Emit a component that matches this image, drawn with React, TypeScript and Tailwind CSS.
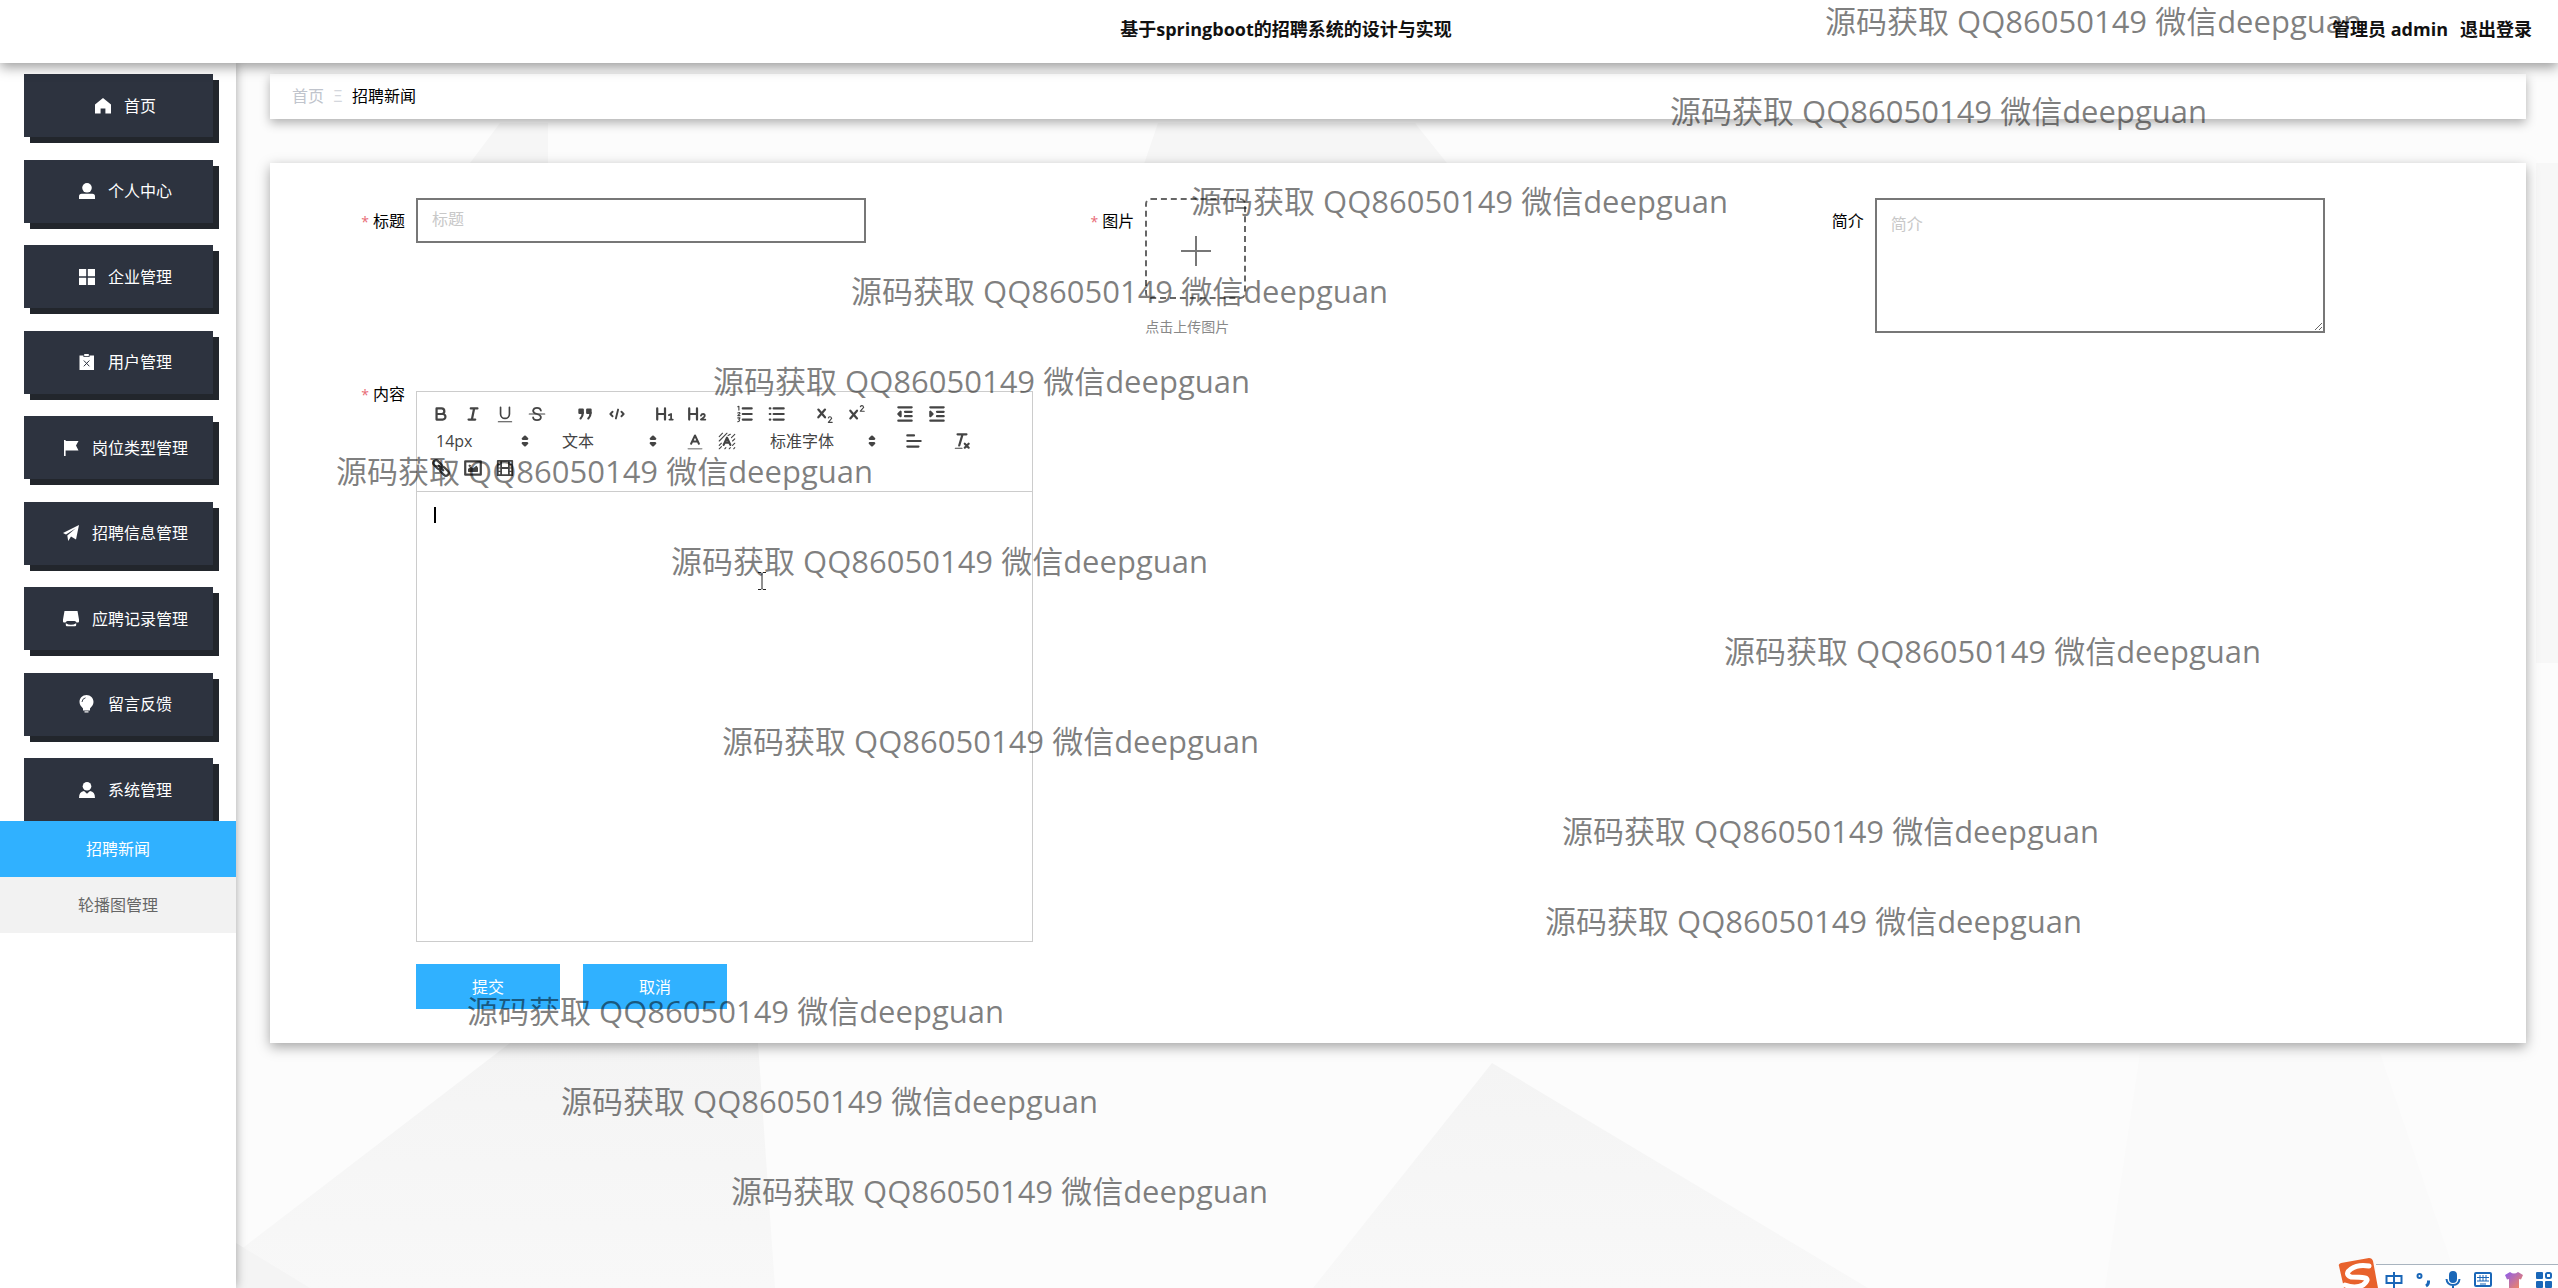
import type { ReactNode } from 'react';

const Icon = ({ children, className = 'size-4' }: { children: ReactNode; className?: string }) => (
  <svg viewBox="0 0 16 16" className={className} fill="currentColor" aria-hidden="true">
    {children}
  </svg>
);

const menu: { label: string; icon: ReactNode }[] = [
  { label: '首页', icon: <path d="M8 0 0 6.5V15.5H5.6V10.5H10.4V15.5H16V6.5Z" /> },
  {
    label: '个人中心',
    icon: (
      <>
        <circle cx="8" cy="4.8" r="4.8" />
        <path d="M0 16v-2.5Q0 10.8 2.700 10.800h10.600Q16 10.800 16 13.500V16Z" />
      </>
    ),
  },
  { label: '企业管理', icon: <path d="M0 0h7.200v7.200H0ZM8.800 0H16v7.200H8.800ZM0 8.800h7.200V16H0ZM8.800 8.800H16V16H8.800Z" /> },
  {
    label: '用户管理',
    icon: (
      <>
        <path d="M.5 1.500H4.500V3h6V1.500h4.500V16H.5Z" />
        <path d="M5.200 0h4.600v2.200H5.200Z" />
        <path d="M4.800 6.500l5.600 5.800M10.400 6.500l-5.600 5.800" stroke="#2d333f" strokeWidth="1" />
      </>
    ),
  },
  { label: '岗位类型管理', icon: <path d="M1 0h1.600v1H15.500L13 5.500l2.500 5H2.600V16H1Z" /> },
  { label: '招聘信息管理', icon: <path d="M16 0 13 14.500 8 11.600 5.200 16 4.300 10.600 12.800 3.200 3 9.600 0 8Z" /> },
  {
    label: '应聘记录管理',
    icon: (
      <>
        <path d="M1.500 0h13L16 8.500v2q0 1-1 1h-1.500q-.5-1.500-2-1.500h-7q-1.500 0-2 1.500H1q-1 0-1-1v-2Z" />
        <path d="M2.800 12.200q2.500 1.600 5.200 1.600t5.200-1.600V14q0 1.200-1.200 1.200H4q-1.200 0-1.200-1.200Z" />
      </>
    ),
  },
  {
    label: '留言反馈',
    icon: (
      <>
        <path d="M7.500 -1C11.500 -1 14.500 2 14.500 6 14.500 9 12.500 10.500 11 12.500V14.500H4V12.500C2.500 10.500.5 9 .5 6 .5 2 3.500 -1 7.500 -1Z" />
        <path d="M5.500 15.300h4V16.500h-4Z" />
        <path d="M3 6Q3.200 2.600 6.500 1.800" stroke="#2d333f" strokeWidth=".9" fill="none" />
      </>
    ),
  },
  {
    label: '系统管理',
    icon: (
      <>
        <circle cx="8" cy="4.300" r="4.300" />
        <path d="M0 16q0-6.500 5-7l3 2.700 3-2.700q5 .5 5 7Z" />
      </>
    ),
  },
];

const Tool = ({ label, children }: { label: string; children: ReactNode }) => (
  <button type="button" aria-label={label} className="flex h-[27px] w-8 items-center justify-center text-[#444]">
    <svg viewBox="0 0 18 18" className="size-5" fill="none" stroke="currentColor" strokeWidth="2" strokeLinecap="round" strokeLinejoin="round">
      {children}
    </svg>
  </button>
);

const Group = ({ children }: { children: ReactNode }) => <div className="mr-4 flex">{children}</div>;

const Picker = ({ label, text, className }: { label: string; text: string; className: string }) => (
  <div className={`relative flex h-[27px] items-center text-[#444] ${className}`}>
    <select aria-label={label} className="h-full w-full appearance-none bg-transparent pl-[11px] text-base leading-6 outline-none">
      <option>{text}</option>
    </select>
    <svg viewBox="0 0 18 18" className="pointer-events-none absolute right-0 size-5" fill="currentColor" stroke="currentColor" strokeWidth="2" strokeLinejoin="round">
      <path d="M7 11 9 13 11 11ZM7 7 9 5 11 7Z" />
    </svg>
  </div>
);

const Label = ({ htmlFor, required, children }: { htmlFor: string; required?: boolean; children: string }) => (
  <label htmlFor={htmlFor} className="w-28 shrink-0 pr-[11px] text-right text-base leading-[46px] text-black">
    {required && <span className="mr-1 text-sm text-[#e86a76]">*</span>}
    {children}
  </label>
);

const watermark = '源码获取 QQ86050149 微信deepguan';
const watermarkIndents = [
  'pl-[1825px]',
  'pl-[1670px]',
  'pl-[1191px]',
  'pl-[851px]',
  'pl-[713px]',
  'pl-[336px]',
  'pl-[671px]',
  'pl-[1724px]',
  'pl-[722px]',
  'pl-[1562px]',
  'pl-[1545px]',
  'pl-[467px]',
  'pl-[561px]',
  'pl-[731px]',
];

const Backdrop = () => (
  <svg viewBox="0 0 2322 1225" preserveAspectRatio="none" className="absolute inset-0 h-full w-full" aria-hidden="true">
    <defs>
      <linearGradient id="fade" x1="0" y1="0" x2="0" y2="1">
        <stop offset="0" stopColor="#f4f4f4" />
        <stop offset="1" stopColor="#f8f8f8" />
      </linearGradient>
    </defs>
    <path d="M274 980 522 980 539 1225H0V1190Z" fill="url(#fade)" />
    <path d="M0 1180 74 1225H0Z" fill="#f4f4f4" />
    <path d="M1256 1000 1077 1225H1632Z" fill="url(#fade)" />
    <path d="M1904 990H2144L2224 1225H1869Z" fill="#fafafa" />
    <path d="M2300 100H2322V600H2300Z" fill="#f7f7f7" />
    <path d="M264 60H312V104H231Z" fill="#f6f6f6" />
    <path d="M922 60H1179L1214 104H907Z" fill="#f6f6f6" />
  </svg>
);

export default function App() {
  return (
    <div className="relative flex min-h-screen flex-col overflow-hidden bg-[#fcfcfc] font-['Open_Sans','Noto_Sans_CJK_SC',sans-serif] text-base">
      <header className="z-20 flex h-[63px] items-center bg-white pb-1.5 text-lg font-bold text-[#111] shadow-[0_4px_12px_rgba(0,0,0,0.4)]">
        <div className="flex-1" />
        <h1 className="pl-10">基于springboot的招聘系统的设计与实现</h1>
        <div className="flex flex-1 justify-end gap-3 pr-[26px]">
          <span>管理员 admin</span>
          <button type="button">退出登录</button>
        </div>
      </header>

      <div className="flex flex-1">
        <aside className="z-10 w-[236px] shrink-0 bg-white pt-[11px] shadow-[0_0_10px_rgba(0,0,0,0.35)]">
          <nav className="flex h-[747px] flex-col justify-between pr-[23px] pl-6">
            {menu.map((m) => (
              <a
                key={m.label}
                href="#"
                className="flex h-[63px] items-center justify-center gap-[13px] bg-[#2d333f] pl-[14px] text-white shadow-[6px_6px_0_#22262c]"
              >
                <Icon className="size-4 overflow-visible">{m.icon}</Icon>
                <span>{m.label}</span>
              </a>
            ))}
          </nav>
          <nav className="relative text-center leading-[56px]">
            <a href="#" className="block bg-[#30b1ff] text-white">
              招聘新闻
            </a>
            <a href="#" className="block bg-[#f2f2f2] text-[#666]">
              轮播图管理
            </a>
          </nav>
        </aside>

        <main className="relative flex-1">
          <Backdrop />
          <div className="relative pt-[11px] pr-8 pl-[34px]">
            <nav className="flex h-[45px] items-center bg-white px-[22px] pb-0.5 shadow-[0_4px_10px_rgba(0,0,0,0.3)]">
              <a href="#" className="text-[#c0c4cc]">
                首页
              </a>
              <span className="mx-[9px] w-[10px] text-center text-[#d4d7dd]">Ξ</span>
              <span className="text-black">招聘新闻</span>
            </nav>

            <form className="mt-[44px] bg-white px-[34px] pt-[35px] pb-[34px] shadow-[0_4px_12px_rgba(0,0,0,0.35)]" onSubmit={(e) => e.preventDefault()}>
              <div className="grid grid-cols-3">
                <div className="flex items-start">
                  <Label htmlFor="title" required>
                    标题
                  </Label>
                  <input id="title" placeholder="标题" className="h-[45px] w-[450px] border-2 border-[#777] px-[14px] pb-1 outline-none placeholder:text-[#c8c8c8]" />
                </div>
                <div className="flex items-start">
                  <Label htmlFor="picture" required>
                    图片
                  </Label>
                  <div>
                    <button id="picture" type="button" aria-label="图片" className="flex size-[101px] items-center justify-center rounded-md border-2 border-dashed border-[#666] pt-1 text-[#777]">
                      <svg viewBox="0 0 30 30" className="size-[30px]" stroke="currentColor" strokeWidth="2" aria-hidden="true">
                        <path d="M15 0V30M0 15H30" />
                      </svg>
                    </button>
                    <p className="mt-4 text-sm leading-6 text-[#888]">点击上传图片</p>
                  </div>
                </div>
                <div className="flex items-start">
                  <Label htmlFor="intro">简介</Label>
                  <textarea id="intro" placeholder="简介" className="h-[135px] w-[450px] border-2 border-[#777] px-[14px] py-3 outline-none placeholder:text-[#c8c8c8]" />
                </div>
              </div>

              <div className="mt-[52px] flex items-start">
                <div className="-mt-5">
                  <div className="flex w-28">
                    <Label htmlFor="content" required>
                      内容
                    </Label>
                  </div>
                </div>
                <div className="w-[617px] border border-[#ccc]">
                  <div className="flex h-[100px] flex-wrap content-start border-b border-[#ccc] pt-2 pr-6 pl-2">
                    <Group>
                      <Tool label="粗体">
                        <path d="M5 4H9.500A2.500 2.500 0 0 1 12 6.500 2.500 2.500 0 0 1 9.500 9H5ZM5 9H10.500A2.500 2.500 0 0 1 13 11.500 2.500 2.500 0 0 1 10.500 14H5Z" />
                      </Tool>
                      <Tool label="斜体">
                        <path d="M7 4H13M5 14H11M8 14 10 4" />
                      </Tool>
                      <Tool label="下划线">
                        <path d="M5 3V9A4 4 0 0 0 9 13 4 4 0 0 0 13 9V3" strokeWidth="1.500" />
                        <path d="M3 16H15" strokeWidth="1" />
                      </Tool>
                      <Tool label="删除线">
                        <path d="M2 9H16" strokeWidth="1" />
                        <path d="M12.500 6Q12 3.500 9 3.500T5.500 6Q5.500 8 9 9T12.500 12Q12.500 14.500 9 14.500T5.500 12" strokeWidth="1.600" />
                      </Tool>
                    </Group>
                    <Group>
                      <Tool label="引用">
                        <path d="M4 5H7V8H4ZM11 5H14V8H11Z" fill="currentColor" />
                        <path d="M7 8Q7 11 5 13M14 8Q14 11 12 13" />
                      </Tool>
                      <Tool label="代码">
                        <path d="M5 7 3 9 5 11M13 7 15 9 13 11M10 5 8 13" strokeWidth="1.700" />
                      </Tool>
                    </Group>
                    <Group>
                      <Tool label="标题 1">
                        <path d="M2 4V14M9 4V14M2 9H9" />
                        <path d="M12.500 10 14.500 9V14M13 14H16" strokeWidth="1.600" />
                      </Tool>
                      <Tool label="标题 2">
                        <path d="M2 4V14M9 4V14M2 9H9" />
                        <path d="M12.500 10.500Q13 9 14.500 9T16 10.500Q16 11.500 12.500 14H16.500" strokeWidth="1.600" />
                      </Tool>
                    </Group>
                    <Group>
                      <Tool label="有序列表">
                        <path d="M7 4H15M7 9H15M7 14H15" />
                        <path d="M2.500 2.500 3.500 2V5.500M2.500 8Q4.500 7 4.500 8.500L2.500 10.500H4.500M2.500 12.500H4.500L3.500 14Q5 15 2.500 16" strokeWidth="1" />
                      </Tool>
                      <Tool label="无序列表">
                        <path d="M6 4H15M6 9H15M6 14H15M2.500 4H3M2.500 9H3M2.500 14H3" />
                      </Tool>
                    </Group>
                    <Group>
                      <Tool label="下标">
                        <path d="M3 5 9 12M9 5 3 12" />
                        <path d="M12 12.500Q12.500 11.500 13.500 11.500T15 13L12 16.500H15.500" strokeWidth="1" />
                      </Tool>
                      <Tool label="上标">
                        <path d="M3 6 9 13M9 6 3 13" />
                        <path d="M12 2.500Q12.500 1.500 13.500 1.500T15 3L12 6.500H15.500" strokeWidth="1" />
                      </Tool>
                    </Group>
                    <Group>
                      <Tool label="减少缩进">
                        <path d="M3 3H15M3 15H15M9 7H15M9 11H15" />
                        <path d="M5 7V11L3 9Z" fill="currentColor" />
                      </Tool>
                      <Tool label="增加缩进">
                        <path d="M3 3H15M3 15H15M9 7H15M9 11H15" />
                        <path d="M3 7V11L5 9Z" fill="currentColor" />
                      </Tool>
                    </Group>
                    <Group>
                      <Picker label="字号" text="14px" className="w-[110px]" />
                    </Group>
                    <Group>
                      <Picker label="段落" text="文本" className="w-[112px]" />
                    </Group>
                    <Group>
                      <Tool label="文字颜色">
                        <path d="M5.500 11.500 9 4 12.500 11.500M6.500 9.500H11.500" strokeWidth="1.800" />
                        <path d="M3 16H15" stroke="#999" strokeWidth="1.500" />
                      </Tool>
                      <Tool label="背景颜色">
                        <path d="M2 5 5 2M2 9 9 2M2 13 4 11M2 16 4 14M12 3 10 4M16 3 13 6M16 7 14 9M16 11 14 13M16 15 15 16M7 16 8 15M11 16 12 15" strokeWidth="1" />
                        <path d="M6 12.500 9 6 12 12.500M7 10.500H11" strokeWidth="2" />
                      </Tool>
                    </Group>
                    <Group>
                      <Picker label="字体" text="标准字体" className="w-[123px]" />
                    </Group>
                    <Group>
                      <Tool label="对齐">
                        <path d="M3 9H15M3 14H13M3 4H9" />
                      </Tool>
                    </Group>
                    <Group>
                      <Tool label="清除格式">
                        <path d="M5 3H13M6.500 13 9.500 3M11.500 11.500 15 15M15 11.500 11.500 15" />
                        <path d="M3 15.500H9" strokeWidth="1" />
                      </Tool>
                    </Group>
                    <Group>
                      <Tool label="链接">
                        <rect x="1.500" y="3.500" width="9" height="5" rx="2.500" transform="rotate(45 6 6)" />
                        <rect x="7.500" y="9.500" width="9" height="5" rx="2.500" transform="rotate(45 12 12)" />
                        <path d="M7 7 11 11" />
                      </Tool>
                      <Tool label="图片">
                        <path d="M2 3H16V15H2Z" />
                        <path d="M5 12V10L7 8.500 9 10 12 7.500 13 9V12Z" fill="currentColor" strokeWidth="1" />
                        <circle cx="6" cy="7" r=".8" fill="currentColor" strokeWidth=".5" />
                      </Tool>
                      <Tool label="视频">
                        <path d="M2.500 2.500H15.500V15.500H2.500ZM5.500 3V15M12.500 3V15M6 9H12" strokeWidth="1.600" />
                        <path d="M3 6H5M3 9H5M3 12H5M13 6H15M13 9H15M13 12H15" strokeWidth="1" />
                      </Tool>
                    </Group>
                  </div>
                  <div id="content" role="textbox" aria-label="内容" className="h-[449px] px-[17px] pt-[15px]">
                    <span className="block h-4 w-[2px] bg-black" />
                  </div>
                </div>
              </div>

              <div className="mt-[22px] flex gap-[23px] pl-28">
                <button type="submit" className="h-[45px] w-36 bg-[#30b1ff] text-white">
                  提交
                </button>
                <button type="button" className="h-[45px] w-36 bg-[#30b1ff] text-white">
                  取消
                </button>
              </div>
            </form>
          </div>
        </main>
      </div>

      <div className="pointer-events-none absolute inset-x-0 top-0 z-30 flex flex-col gap-12 text-[31px] leading-[42px] whitespace-nowrap text-black/50">
        {watermarkIndents.map((indent) => (
          <p key={indent} className={indent}>
            {watermark}
          </p>
        ))}
      </div>

      <svg viewBox="0 0 10 18" className="pointer-events-none absolute top-[572px] left-[757px] z-30 h-[18px] w-[10px]" fill="none" stroke="#222" aria-hidden="true">
        <path d="M1 .5H4L5 1.500 6 .5H9M5 1.500V16.500M1 17.500H4L5 16.500 6 17.500H9" />
      </svg>

      <div className="absolute right-0 bottom-0 z-30 flex h-6 w-[182px] items-center justify-between border-t border-[#a9b4bf] bg-white pt-1.5 pr-1.5 pl-[9px] text-[#1a67b8]">
        <svg viewBox="0 0 40 30" className="absolute bottom-0 -left-[38px] h-[30px] w-10" aria-hidden="true">
          <path d="M1 8Q0 6 3 5L31 0Q34 0 35 3L40 30H6Z" fill="#e8622c" />
          <path d="M31 8Q20 6 13 11T13 19Q22 19 27 20T25 27Q17 31 7 27" fill="none" stroke="#fff" strokeWidth="5" strokeLinecap="round" />
        </svg>
        <svg viewBox="0 0 18 18" className="size-[18px]" fill="none" stroke="currentColor" strokeWidth="2" aria-hidden="true">
          <path d="M1.500 5H16.500V12H1.500ZM9 1V18" />
        </svg>
        <svg viewBox="0 0 16 16" className="size-4" fill="none" stroke="currentColor" strokeWidth="2" aria-hidden="true">
          <circle cx="3.500" cy="4" r="2" />
          <path d="M12.500 8.500V10Q12.500 12.500 10 14" strokeWidth="3" />
        </svg>
        <svg viewBox="0 0 16 18" className="h-[18px] w-4" fill="none" stroke="currentColor" strokeWidth="2" aria-hidden="true">
          <rect x="5" y="1" width="6" height="10" rx="3" fill="currentColor" />
          <path d="M1.500 8Q2 14 8 14T14.500 8M8 14V17" />
        </svg>
        <svg viewBox="0 0 18 16" className="h-4 w-[18px]" fill="none" stroke="currentColor" strokeWidth="2" aria-hidden="true">
          <rect x="1" y="1" width="16" height="13" rx="1" />
          <path d="M3 5.500H15M3 9H15M6 12H12M6 3V9M9 3V9M12 3V9" strokeWidth="1" />
        </svg>
        <svg viewBox="0 0 18 18" className="size-[18px]" aria-hidden="true">
          <defs>
            <linearGradient id="shirt" x1="0" y1="0" x2="1" y2="1">
              <stop offset="0" stopColor="#8a5cf0" />
              <stop offset="1" stopColor="#ff8a50" />
            </linearGradient>
          </defs>
          <path d="M5 1Q9 4 13 1L18 4 16 8.500 14 8V18H4V8L2 8.500 0 4Z" fill="url(#shirt)" />
        </svg>
        <svg viewBox="0 0 16 16" className="size-4" fill="currentColor" aria-hidden="true">
          <rect width="7" height="7" rx="1" />
          <rect x="10" y="1" width="5" height="5" rx="1.500" fill="none" stroke="currentColor" strokeWidth="2" />
          <rect y="9" width="7" height="7" rx="1" />
          <rect x="9" y="9" width="7" height="7" rx="1" />
        </svg>
      </div>
    </div>
  );
}
